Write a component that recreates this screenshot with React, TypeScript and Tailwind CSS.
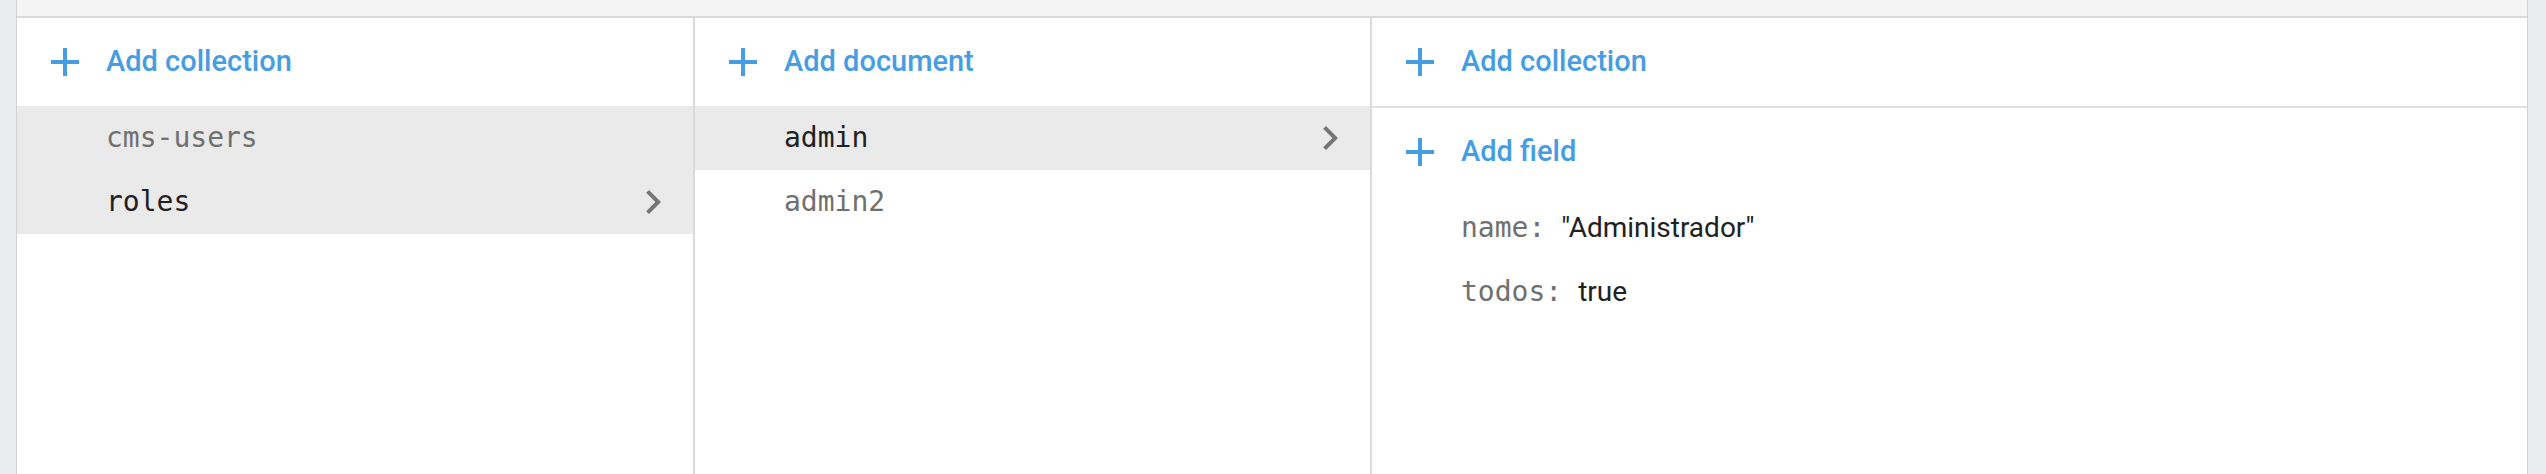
import React from "react";

const BLUE = "text-[#469de2]";

function PlusIcon() {
    return (
        <svg viewBox="0 0 24 24" className="w-12 h-12 shrink-0 fill-[#469de2]">
            <path d="M19 13h-6v6h-2v-6H5v-2h6V5h2v6h6v2z" />
        </svg>
    );
}

function Chevron() {
    return (
        <svg viewBox="0 0 24 24" className="w-12 h-12 shrink-0 fill-[#757575]">
            <path d="M10 6 8.59 7.41 13.17 12l-4.58 4.59L10 18l6-6z" />
        </svg>
    );
}

function AddRow({ label }: { label: string }) {
    return (
        <div className="h-[88px] flex items-center pl-6 shrink-0">
            <PlusIcon />
            <span className={`ml-[17px] text-[29px] font-medium ${BLUE} font-['Roboto',sans-serif]`}>{label}</span>
        </div>
    );
}

function ListRow({ label, active, selected }: { label: string; active?: boolean; selected?: boolean }) {
    return (
        <div className={`h-16 flex items-center justify-between pl-[89px] pr-4 ${active ? "bg-[#eaeaea]" : ""}`}>
            <span
                className={`text-[28px] font-['DejaVu_Sans_Mono',monospace] ${selected ? "text-[#212121]" : "text-[#707070]"}`}
            >
                {label}
            </span>
            {selected && <Chevron />}
        </div>
    );
}

function Field({ name, value }: { name: string; value: string }) {
    return (
        <div className="h-16 flex items-center pl-[89px]">
            <span className="text-[28px] text-[#707070] font-['DejaVu_Sans_Mono',monospace]">{name}:</span>
            <span className="ml-4 text-[28px] text-[#212121] font-['Roboto',sans-serif]">{value}</span>
        </div>
    );
}

export default function App() {
    return (
        <div className="w-full h-[474px] flex bg-[#e9edf0] overflow-hidden">
            <div className="w-[17px] shrink-0 border-r border-[#d2d2d2]" />

            <div className="flex-1 flex flex-col bg-white border-r border-[#d2d2d2]">
                {/* Header strip */}
                <div className="h-[18px] shrink-0 bg-[#f4f4f4] border-b-2 border-[#d9d9d9]" />

                <div className="flex-1 flex">
                    {/* Collections */}
                    <div className="w-[678px] shrink-0 flex flex-col border-r-2 border-[#dadada]">
                        <AddRow label="Add collection" />
                        <div className="bg-[#eaeaea]">
                            <ListRow label="cms-users" active />
                            <ListRow label="roles" active selected />
                        </div>
                    </div>

                    {/* Documents */}
                    <div className="w-[677px] shrink-0 flex flex-col border-r-2 border-[#dadada]">
                        <AddRow label="Add document" />
                        <ListRow label="admin" active selected />
                        <ListRow label="admin2" />
                    </div>

                    {/* Document data */}
                    <div className="flex-1 flex flex-col">
                        <div className="border-b-2 border-[#e0e0e0]">
                            <AddRow label="Add collection" />
                        </div>
                        <AddRow label="Add field" />
                        <Field name="name" value={'"Administrador"'} />
                        <Field name="todos" value="true" />
                    </div>
                </div>
            </div>

            <div className="w-[18px] shrink-0" />
        </div>
    );
}
